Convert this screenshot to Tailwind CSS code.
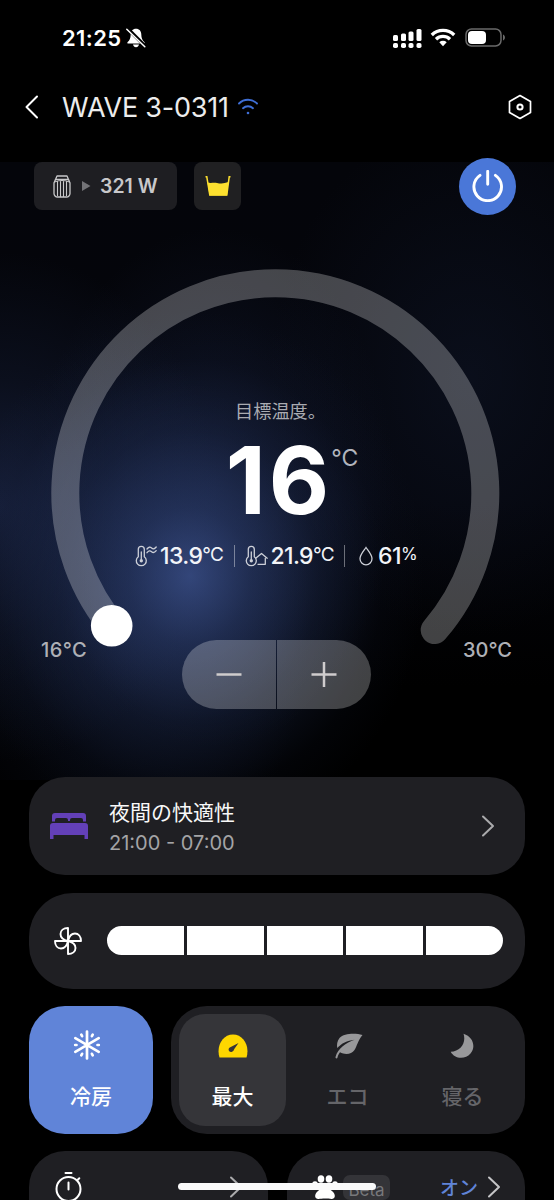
<!DOCTYPE html>
<html lang="ja">
<head>
    <meta charset="UTF-8">
    <meta name="viewport" content="width=device-width, initial-scale=1.0">
    <title>WAVE 3-0311</title>
    <script src="https://cdn.jsdelivr.net/npm/@tailwindcss/browser@4"></script>
    <style>
        body { font-family: 'Inter', 'Noto Sans CJK JP', sans-serif; }
        .hero-glow {
            background-image:
                radial-gradient(ellipse 235px 265px at 190px 414px, rgba(60, 82, 142, 0.8) 0%, rgba(46, 65, 116, 0.58) 26%, rgba(33, 48, 88, 0.34) 55%, rgba(18, 27, 52, 0.13) 82%, transparent 100%),
                radial-gradient(ellipse 220px 255px at 0px 345px, rgba(36, 50, 92, 0.55) 0%, rgba(25, 36, 66, 0.32) 50%, transparent 100%),
                radial-gradient(ellipse 180px 260px at 215px 325px, rgba(30, 42, 78, 0.42) 0%, transparent 100%),
                radial-gradient(ellipse 190px 270px at 120px 460px, rgba(24, 35, 68, 0.4) 0%, transparent 100%),
                radial-gradient(ellipse 200px 260px at 470px 215px, rgba(15, 22, 40, 0.55) 0%, transparent 100%),
                linear-gradient(#04050a 0%, #04050b 55%, #000 85%);
        }
    </style>
</head>
<body class="bg-black text-white">
<div class="relative w-[554px] h-[1200px] overflow-hidden flex flex-col">

    <!-- Status bar -->
    <div class="h-[76px] shrink-0 flex items-center justify-between pl-[62px] pr-[48px]">
        <div class="flex items-center gap-[4px]">
            <span class="text-[22px] font-semibold leading-none tracking-[0.4px]">21:25</span>
            <svg class="w-[20px] h-[20px]" viewBox="0 0 20 20">
                <path d="M10 .8c-3.300 0-5.300 2.400-5.300 5.700 0 4-1.200 5.800-3 7.400-.7.700-.4 1.600.5 1.600h15.600c.9 0 1.200-.9.500-1.600-1.800-1.600-3-3.400-3-7.400C15.300 3.200 13.300.8 10 .8zM7 16.600c.3 1.600 1.500 2.600 3 2.600s2.700-1 3-2.600z" fill="#fff"/>
                <path d="M1.500.5l18 18" stroke="#000" stroke-width="3.600"/>
                <path d="M.8 1.200l18 17.600" stroke="#fff" stroke-width="1.500" stroke-linecap="round"/>
            </svg>
        </div>
        <div class="flex items-center">
            <svg class="w-[30px] h-[21px]" viewBox="0 0 30 21" fill="#fff">
                <rect x="1" y="7" width="5" height="6" rx="1.500"/><rect x="9" y="5.500" width="5" height="7.500" rx="1.500"/><rect x="16.500" y="3.500" width="5" height="9.500" rx="1.500"/><rect x="24.500" y="1" width="5" height="12" rx="1.500"/>
                <rect x="1" y="15" width="5" height="5" rx="1.800"/><rect x="9" y="15" width="5" height="5" rx="1.800"/><rect x="16.500" y="15" width="5" height="5" rx="1.800"/><rect x="24.500" y="15" width="5" height="5" rx="1.800"/>
            </svg>
            <svg class="ml-[8px] mb-[2px] w-[26px] h-[19px]" viewBox="0 0 26 19" fill="none" stroke="#fff" stroke-width="3.300">
                <path d="M1.800 7a15.900 15.900 0 0 1 22.400 0"/>
                <path d="M6 11.300a10 10 0 0 1 14 0"/>
                <path d="M9.300 14.300a5.500 5.500 0 0 1 7.400 0L13 18.300z" fill="#fff" stroke="none"/>
            </svg>
            <svg class="ml-[9px] mb-[2px] w-[41px] h-[19px]" viewBox="0 0 41 19">
                <rect x="1" y="1" width="35" height="17" rx="5.500" fill="none" stroke="#6a6a6a" stroke-width="1.500"/>
                <rect x="3" y="3" width="18" height="13" rx="4" fill="#fff"/>
                <path d="M38 6.500c2.600.8 2.600 5.200 0 6z" fill="#6a6a6a"/>
            </svg>
        </div>
    </div>

    <!-- Title bar -->
    <header class="h-[86px] shrink-0 flex items-center pl-[24px] pr-[22px] pb-[24px]">
        <svg class="w-[16px] h-[24px]" viewBox="0 0 16 24" fill="none" stroke="#fff" stroke-width="2" stroke-linecap="round" stroke-linejoin="round"><path d="M13 1.500L2.500 12 13 22.500"/></svg>
        <h1 class="ml-[22px] w-[169px] text-[27px] font-normal leading-none tracking-[-0.2px] text-[#ececec] whitespace-nowrap">WAVE 3-0311</h1>
        <svg class="ml-[7px] w-[20px] h-[18px]" viewBox="0 0 20 18" fill="none" stroke="#3f6fd6" stroke-width="1.900" stroke-linecap="round">
            <path d="M1 5.500a12.700 12.700 0 0 1 18 0"/><path d="M5 10.200a7.200 7.200 0 0 1 10 0"/><circle cx="10" cy="15" r="1.300" fill="#3f6fd6" stroke="none"/>
        </svg>
        <svg class="ml-auto w-[24px] h-[26px]" viewBox="0 0 24 26" fill="none" stroke="#fff" stroke-width="1.700" stroke-linejoin="round">
            <path d="M12 1.500l10.500 6v11L12 24.500l-10.500-6v-11z"/><circle cx="12" cy="13" r="2.600" stroke-width="2"/>
        </svg>
    </header>

    <main class="flex flex-col">
        <section class="hero-glow h-[618px] shrink-0">
            <div class="h-[48px] flex items-center pl-[34px] pr-[38px]">
                <div class="w-[143px] h-[48px] rounded-[8px] bg-[#1e1e22] flex items-center pl-[19px]">
                    <svg class="w-[18px] h-[23px]" viewBox="0 0 18 23" fill="none" stroke="#c8c8ca" stroke-width="1.300">
                        <path d="M4 1h10l1.500 3.500H2.500z" stroke-linejoin="round"/>
                        <path d="M2.500 4.500L1 8v10.500A3.500 3.500 0 0 0 4.500 22h9a3.500 3.500 0 0 0 3.500-3.500V8l-1.500-3.500"/>
                        <path d="M1.500 7q7.500-3 15 0M4.500 6.500V21M7.500 6V22M10.500 6V22M13.500 6.500V21" stroke-width="1.100"/>
                    </svg>
                    <svg class="ml-[11px] w-[9px] h-[12px]" viewBox="0 0 9 12"><path d="M0 1l8.500 5L0 11z" fill="#737377"/></svg>
                    <span class="ml-[9px] pt-[2px] text-[19.500px] font-semibold leading-none text-[#c8c8ca] whitespace-nowrap">321 W</span>
                </div>
                <div class="ml-[17px] w-[47px] h-[48px] rounded-[8px] bg-[#202022] flex items-center justify-center">
                    <svg class="w-[26px] h-[22px]" viewBox="0 0 26 22">
                        <path d="M2.500 7.500c4 1 6-.4 9.500.4s7 .8 11.500-.8L22 20.500H4.500z" fill="#fde02f"/>
                        <path d="M.5 1.800h1.300L4.800 20h17L24.200 1.800h1.300" fill="none" stroke="#fde02f" stroke-width="1.500"/>
                    </svg>
                </div>
                <button class="ml-auto w-[57px] h-[57px] rounded-full bg-[#4a77d8] flex items-center justify-center">
                    <svg class="w-[32px] h-[32px]" viewBox="0 0 32 32" fill="none" stroke="#fff" stroke-width="2.900" stroke-linecap="round"><path d="M8 5.900a13.800 13.800 0 1 0 15.400 0M15.700 1.800v13" transform="translate(0 -.5)"/></svg>
                </button>
            </div>

            <!-- Temperature dial -->
            <div class="grid h-[570px]">
                <svg class="col-start-1 row-start-1 w-[554px] h-[570px]" viewBox="0 210 554 570">
                    <path d="M115.900 630A210 210 0 1 1 434.700 630" fill="none" stroke="#fff" stroke-opacity=".26" stroke-width="28" stroke-linecap="round"/>
                    <circle cx="111.700" cy="625.700" r="20.800" fill="#fff"/>
                </svg>
                <div class="col-start-1 row-start-1 flex flex-col items-center pt-[191px]">
                    <p class="h-[20px] text-[18.200px] leading-[20px] text-[#a9abb1] pl-[7px]">目標温度。</p>
                    <div class="mt-[25px] h-[68px] flex items-start pl-[30px]">
                        <span class="text-[93px] font-bold leading-[68px] tracking-[3px]">16</span>
                        <span class="-ml-px mt-px text-[23px] leading-[22px] text-[#b1b4bd]">°C</span>
                    </div>
                    <div class="mt-[30px] mr-[2px] h-[24px] flex items-center text-[23px] font-medium leading-none tracking-[-0.6px] text-[#f2f4f8]">
                        <svg class="w-[22px] h-[22px]" viewBox="0 0 22 22" fill="none" stroke="#cdd0d8" stroke-width="1.300" stroke-linecap="round">
                            <path d="M3.300 11.700V4.300a3 3 0 0 1 6 0v7.400a5 5 0 1 1-6 0zM6.300 7v7"/><circle cx="6.300" cy="15.800" r="1.700" fill="#cdd0d8" stroke="none"/>
                            <path d="M12 4q2.300-3 4.600-1t4.600-1M12 7.700q2.300-3 4.600-1t4.600-1"/>
                        </svg>
                        <span class="ml-[3px]">13.9</span><span class="mb-[4px] text-[19px] font-normal">°C</span>
                        <i class="ml-[11px] mr-[10px] w-px h-[22px] bg-white/40"></i>
                        <svg class="w-[23px] h-[22px]" viewBox="0 0 23 22" fill="none" stroke="#cdd0d8" stroke-width="1.300" stroke-linecap="round" stroke-linejoin="round">
                            <path d="M3.300 11.700V4.300a3 3 0 0 1 6 0v7.400a5 5 0 1 1-6 0zM6.300 7v7"/><circle cx="6.300" cy="15.800" r="1.700" fill="#cdd0d8" stroke="none"/>
                            <path d="M11 13l5.500-4.500 5.700 4.700M13 19.300h7.300v-6"/>
                        </svg>
                        <span class="ml-[2px]">21.9</span><span class="mb-[4px] text-[19px] font-normal">°C</span>
                        <i class="ml-[10px] mr-[14px] w-px h-[22px] bg-white/40"></i>
                        <svg class="w-[14px] h-[20px]" viewBox="0 0 14 20" fill="none" stroke="#cdd0d8" stroke-width="1.300"><path d="M7 1.500C4.500 5.200 1 8.800 1 12.800a6 6 0 0 0 12 0C13 8.800 9.500 5.200 7 1.500z"/></svg>
                        <span class="ml-[5px]">61</span><span class="mb-[4px] text-[17px] font-normal">%</span>
                    </div>
                    <div class="mt-[72px] w-full flex items-start justify-between pl-[41px] pr-[42px] text-[20px] font-medium leading-none text-[#aeb0b6]">
                        <span class="w-[80px] tracking-[0.4px]">16°C</span>
                        <div class="flex h-[69px]">
                            <button class="w-[94px] h-[69px] rounded-l-full bg-white/25 flex items-center justify-center">
                                <svg class="w-[26px] h-[26px]" viewBox="0 0 26 26" stroke="#cfcccd" stroke-width="2.500"><path d="M.5 12.500h25"/></svg>
                            </button>
                            <button class="ml-px w-[94px] h-[69px] rounded-r-full bg-white/25 flex items-center justify-center">
                                <svg class="w-[26px] h-[26px]" viewBox="0 0 26 26" stroke="#cfcccd" stroke-width="2.500"><path d="M.5 12.500h25M13 0v25"/></svg>
                            </button>
                        </div>
                        <span class="w-[80px] text-right">30°C</span>
                    </div>
                </div>
            </div>
        </section>

        <div class="-mt-[3px] px-[29px] flex flex-col gap-[18px]">
            <!-- Night comfort -->
            <div class="w-[496px] h-[98px] rounded-[36px] bg-[#1f1f23] flex items-center pl-[20px] pr-[30px]">
                <svg class="w-[40px] h-[28px]" viewBox="0 0 40 28" fill="#6340b8">
                    <path d="M3 9.500V4a3 3 0 0 1 3-3h28a3 3 0 0 1 3 3v5.500h-3V8q0-2-2-2H23q-2 0-2 2v1h-2V8q0-2-2-2H8Q6 6 6 8v1.500z"/>
                    <path d="M1 27V14a3 3 0 0 1 3-3h32a3 3 0 0 1 3 3v13h-3.500v-4h-31v4z"/>
                </svg>
                <div class="ml-[20px] pt-[4px] flex flex-col">
                    <span class="text-[21px] leading-[30px] font-normal text-[#f8f8f8]">夜間の快適性</span>
                    <span class="text-[20px] leading-[30px] text-[#a4a4a6]">21:00 - 07:00</span>
                </div>
                <svg class="ml-auto w-[14px] h-[22px]" viewBox="0 0 14 22" fill="none" stroke="#aaaaac" stroke-width="2" stroke-linecap="round" stroke-linejoin="round"><path d="M2 1.500L12 11 2 20.500"/></svg>
            </div>

            <!-- Fan speed -->
            <div class="w-[496px] h-[96px] rounded-[44px] bg-[#1f1f23] flex items-center pl-[25px] pb-px">
                <svg class="w-[28px] h-[28px]" viewBox="0 0 28 28" fill="none" stroke="#fff" stroke-width="1.900" stroke-linejoin="round">
                    <path id="blade" d="M14 14V1C9.500 1 6.500 3.600 6.500 7s3 6 7.500 7z"/>
                    <use href="#blade" transform="rotate(90 14 14)"/><use href="#blade" transform="rotate(180 14 14)"/><use href="#blade" transform="rotate(270 14 14)"/>
                </svg>
                <div class="ml-[25px] w-[396px] h-[29px] rounded-full overflow-hidden flex gap-[3px]">
                    <i class="flex-1 bg-white"></i><i class="flex-1 bg-white"></i><i class="flex-1 bg-white"></i><i class="flex-1 bg-white"></i><i class="flex-1 bg-white"></i>
                </div>
            </div>

            <!-- Modes -->
            <div class="-mt-px flex gap-[18px] h-[128px] text-[21px] font-medium leading-none">
                <div class="w-[124px] h-full rounded-[36px] bg-[#6084d8] flex flex-col items-center pt-[23px]">
                    <svg class="-ml-[8px] w-[30px] h-[32px]" viewBox="0 0 30 32" fill="none" stroke="#fff" stroke-width="2.700" stroke-linecap="round">
                        <path d="M15 2.500v27M3.300 9.200l23.400 13.600M26.700 9.200L3.300 22.800"/>
                        <path d="M9.300 5.700l.8 1.500M20.700 5.700l-.8 1.500M9.300 26.300l.8-1.500M20.700 26.300l-.8-1.500M3.200 16h1.300M25.500 16h1.300"/>
                    </svg>
                    <span class="mt-[25px]">冷房</span>
                </div>
                <div class="w-[354px] h-full rounded-[36px] bg-[#1f1f23] p-[8px] flex">
                    <div class="w-[107px] h-full rounded-[26px] bg-[#353539] flex flex-col items-center pt-[20px]">
                        <svg class="w-[30px] h-[24px]" viewBox="0 0 30 24">
                            <path d="M1.500 23.500C-2 12 4.500.5 15 .5S32 12 28.500 23.500z" fill="#fed700"/>
                            <path d="M20.500 9l-8.700 4.600c-2.500 1.500-.7 5.300 2.200 4.200 1.400-.5 1.800-1.600 2.300-2.800z" fill="#353539"/>
                        </svg>
                        <span class="mt-[28px]">最大</span>
                    </div>
                    <div class="ml-[8px] w-[107px] h-full flex flex-col items-center pt-[19px] text-[#656569]">
                        <svg class="ml-[2px] w-[28px] h-[26px]" viewBox="0 0 28 26">
                            <path d="M27.500 2C20 0 9 .3 4.500 5 2 8 1.800 12 2.200 15 6.500 10.300 12 7.500 19.500 6.700 11 10 3 15 .5 24c-.3 1.600 1.700 1.900 2 .5.400-1.900 1.300-3.700 2.500-5.200C10 22 16.500 21.500 19.500 17c2.600-4 3.500-10 8-15z" fill="#98989a"/>
                        </svg>
                        <span class="mt-[27px]">エコ</span>
                    </div>
                    <div class="ml-[8px] w-[107px] h-full flex flex-col items-center pt-[19px] text-[#656569]">
                        <svg class="-ml-[2px] w-[24px] h-[26px]" viewBox="0 0 24 26"><path d="M13.500.8c3 9-3 17.500-12.800 18C4.500 26 15 27 20.500 20.500S23.500 4 13.500.8z" fill="#98989a"/></svg>
                        <span class="mt-[27px]">寝る</span>
                    </div>
                </div>
            </div>

            <!-- Timer and pet care, cut off by the screen edge -->
            <div class="-mt-px flex gap-[19px] h-[98px]">
                <div class="w-[239px] h-full rounded-[36px] bg-[#1f1f23] flex items-start pl-[26px] pr-[25px] pt-[20px]">
                    <svg class="w-[28px] h-[32px]" viewBox="0 0 28 32" fill="none" stroke="#fff" stroke-width="2" stroke-linecap="round"><circle cx="13.500" cy="18" r="12"/><path d="M10.500 2h6M13.500 11.500v7M22.500 9l1.800-1.800"/></svg>
                    <svg class="ml-auto mt-[5px] w-[14px] h-[22px]" viewBox="0 0 14 22" fill="none" stroke="#aaaaac" stroke-width="2" stroke-linecap="round" stroke-linejoin="round"><path d="M2 1.500L12 11 2 20.500"/></svg>
                </div>
                <div class="w-[238px] h-full rounded-[36px] bg-[#1f1f23] flex items-start pl-[25px] pr-[24px] pt-[24px]">
                    <svg class="w-[26px] h-[26px]" viewBox="0 0 26 26" fill="#fff">
                        <ellipse cx="9" cy="4" rx="3.300" ry="3.700"/><ellipse cx="17" cy="4" rx="3.300" ry="3.700"/><ellipse cx="3" cy="9.500" rx="2.800" ry="3.300"/><ellipse cx="23" cy="9.500" rx="2.800" ry="3.300"/>
                        <path d="M13 11c4 0 4 3 7 5s4.500 7.600 0 7.900c-2 .1-4-.4-7-.4s-5 .5-7 .4c-4.500-.3-3-5.900 0-7.900s3-5 7-5z"/>
                    </svg>
                    <span class="ml-[5px] w-[47px] h-[25px] rounded-[7px] bg-[#343438] text-[#78787b] text-[17px] leading-[30px] text-center">Beta</span>
                    <span class="ml-auto mt-[3px] text-[19px] font-medium leading-[22px] text-[#6084d8]">オン</span>
                    <svg class="ml-[9px] mt-px w-[14px] h-[22px]" viewBox="0 0 14 22" fill="none" stroke="#c4c4c6" stroke-width="2" stroke-linecap="round" stroke-linejoin="round"><path d="M2 1.500L12 11 2 20.500"/></svg>
                </div>
            </div>
        </div>
    </main>

    <!-- Home indicator -->
    <div class="absolute left-[178px] top-[1183px] w-[198px] h-[7px] rounded-full bg-[#fafafa]"></div>
</div>
</body>
</html>
